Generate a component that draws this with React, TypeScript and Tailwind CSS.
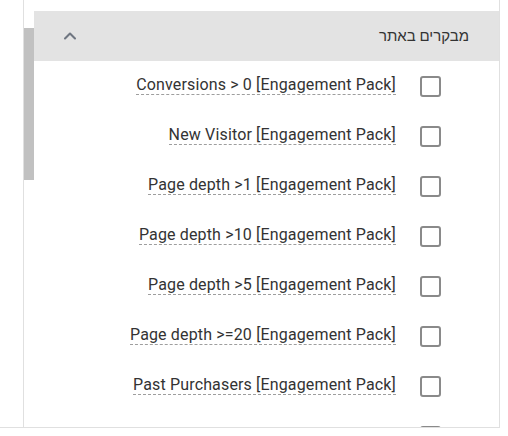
import { ChevronUp } from "lucide-react";

const rows = [
  "Conversions > 0 [Engagement Pack]",
  "New Visitor [Engagement Pack]",
  "Page depth >1 [Engagement Pack]",
  "Page depth >10 [Engagement Pack]",
  "Page depth >5 [Engagement Pack]",
  "Page depth >=20 [Engagement Pack]",
  "Past Purchasers [Engagement Pack]",
  "",
];

export default function App() {
  return (
    <div className="w-[508px] h-[436px] bg-white font-['Roboto',sans-serif] text-[#333]">
      <div className="flex w-[500px] h-[428px] border-b border-r border-[#e0e0e0] overflow-hidden">
        <div className="w-[23px] flex-shrink-0" />
        <div className="w-[11px] flex-shrink-0 border-l border-[#e0e0e0]">
          <div className="mt-[28px] h-[152px] w-[10px] bg-[#c1c1c1]" />
        </div>
        <div className="flex-1 pt-[11px] overflow-hidden">
          <div className="h-[50px] bg-[#e3e3e3] flex items-center justify-between pl-[26px] pr-[30px]">
            <ChevronUp size={20} strokeWidth={2.5} className="text-[#6f7681]" />
            <span dir="rtl" className="text-[15px]">מבקרים באתר</span>
          </div>
          <div>
            {rows.map((r, i) => (
              <div key={i} className="h-[50px] flex items-center justify-end pr-[58px] gap-[24px]">
                {r && (
                  <span className="text-[16px] leading-[19px] tracking-[0.15px] -mt-[2px] border-b border-dashed border-[#9e9e9e]">{r}</span>
                )}
                <span className="w-[21px] h-[21px] border-2 border-[#8a8a8a] rounded-[3px] flex-shrink-0" />
              </div>
            ))}
          </div>
        </div>
      </div>
    </div>
  );
}
